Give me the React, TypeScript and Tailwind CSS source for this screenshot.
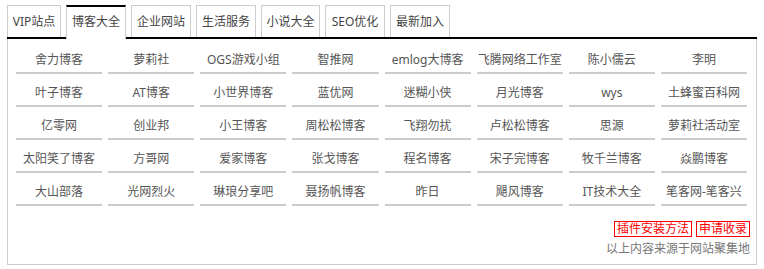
const TABS = [
  { label: "VIP站点", w: "w-[54px]" },
  { label: "博客大全", w: "w-[60px]", active: true },
  { label: "企业网站", w: "w-[60px]" },
  { label: "生活服务", w: "w-[60px]" },
  { label: "小说大全", w: "w-[59px]" },
  { label: "SEO优化", w: "w-[60px]" },
  { label: "最新加入", w: "w-[60px]" },
]

const SITES = [
  "舍力博客", "萝莉社", "OGS游戏小组", "智推网", "emlog大博客", "飞腾网络工作室", "陈小儒云", "李明",
  "叶子博客", "AT博客", "小世界博客", "蓝优网", "迷糊小侠", "月光博客", "wys", "土蜂蜜百科网",
  "亿零网", "创业邦", "小王博客", "周松松博客", "飞翔勿扰", "卢松松博客", "思源", "萝莉社活动室",
  "太阳笑了博客", "方哥网", "爱家博客", "张戈博客", "程名博客", "宋子完博客", "牧千兰博客", "焱鹏博客",
  "大山部落", "光网烈火", "琳琅分享吧", "聂扬帆博客", "昨日", "飓风博客", "IT技术大全", "笔客网-笔客兴",
]

export default function App() {
  return (
    <div className="min-h-[269px] bg-white pt-[5px] pl-[7px] font-['Noto_Sans','Noto_Sans_CJK_SC',sans-serif] text-[12px] text-[#555]">
      <div className="w-[750px]">
        <div className="flex h-[34px] items-start gap-[5px] border-b-2 border-black">
          {TABS.map((tab) =>
            tab.active ? (
              <div
                key={tab.label}
                className={`${tab.w} relative z-10 h-[34px] border-x border-t-2 border-x-[#ccc] border-t-black bg-white text-center leading-[30px] text-[#444]`}
              >
                {tab.label}
              </div>
            ) : (
              <div
                key={tab.label}
                className={`${tab.w} h-[32px] border-x border-t border-[#ccc] text-center leading-[31px] text-[#444]`}
              >
                {tab.label}
              </div>
            )
          )}
        </div>

        <div className="border-x border-b border-[#ccc] pt-[9px] pb-[6px]">
          <ul className="grid grid-cols-8 gap-x-[6px] pl-[8px] pr-[9px]">
            {SITES.map((name) => (
              <li
                key={name}
                className="mb-[7px] h-[26px] truncate border-b-2 border-[#ccc] text-center leading-[24px]"
              >
                {name}
              </li>
            ))}
          </ul>

          <div className="mt-[8px] flex flex-col items-end pr-[6px]">
            <div className="flex gap-[4px]">
              <span className="border border-[#f00] px-[2px] leading-[14px] text-[#f00]">插件安装方法</span>
              <span className="border border-[#f00] px-[2px] leading-[14px] text-[#f00]">申请收录</span>
            </div>
            <p className="mt-[3px] leading-[18px] text-[#777]">以上内容来源于网站聚集地</p>
          </div>
        </div>
      </div>
    </div>
  )
}
